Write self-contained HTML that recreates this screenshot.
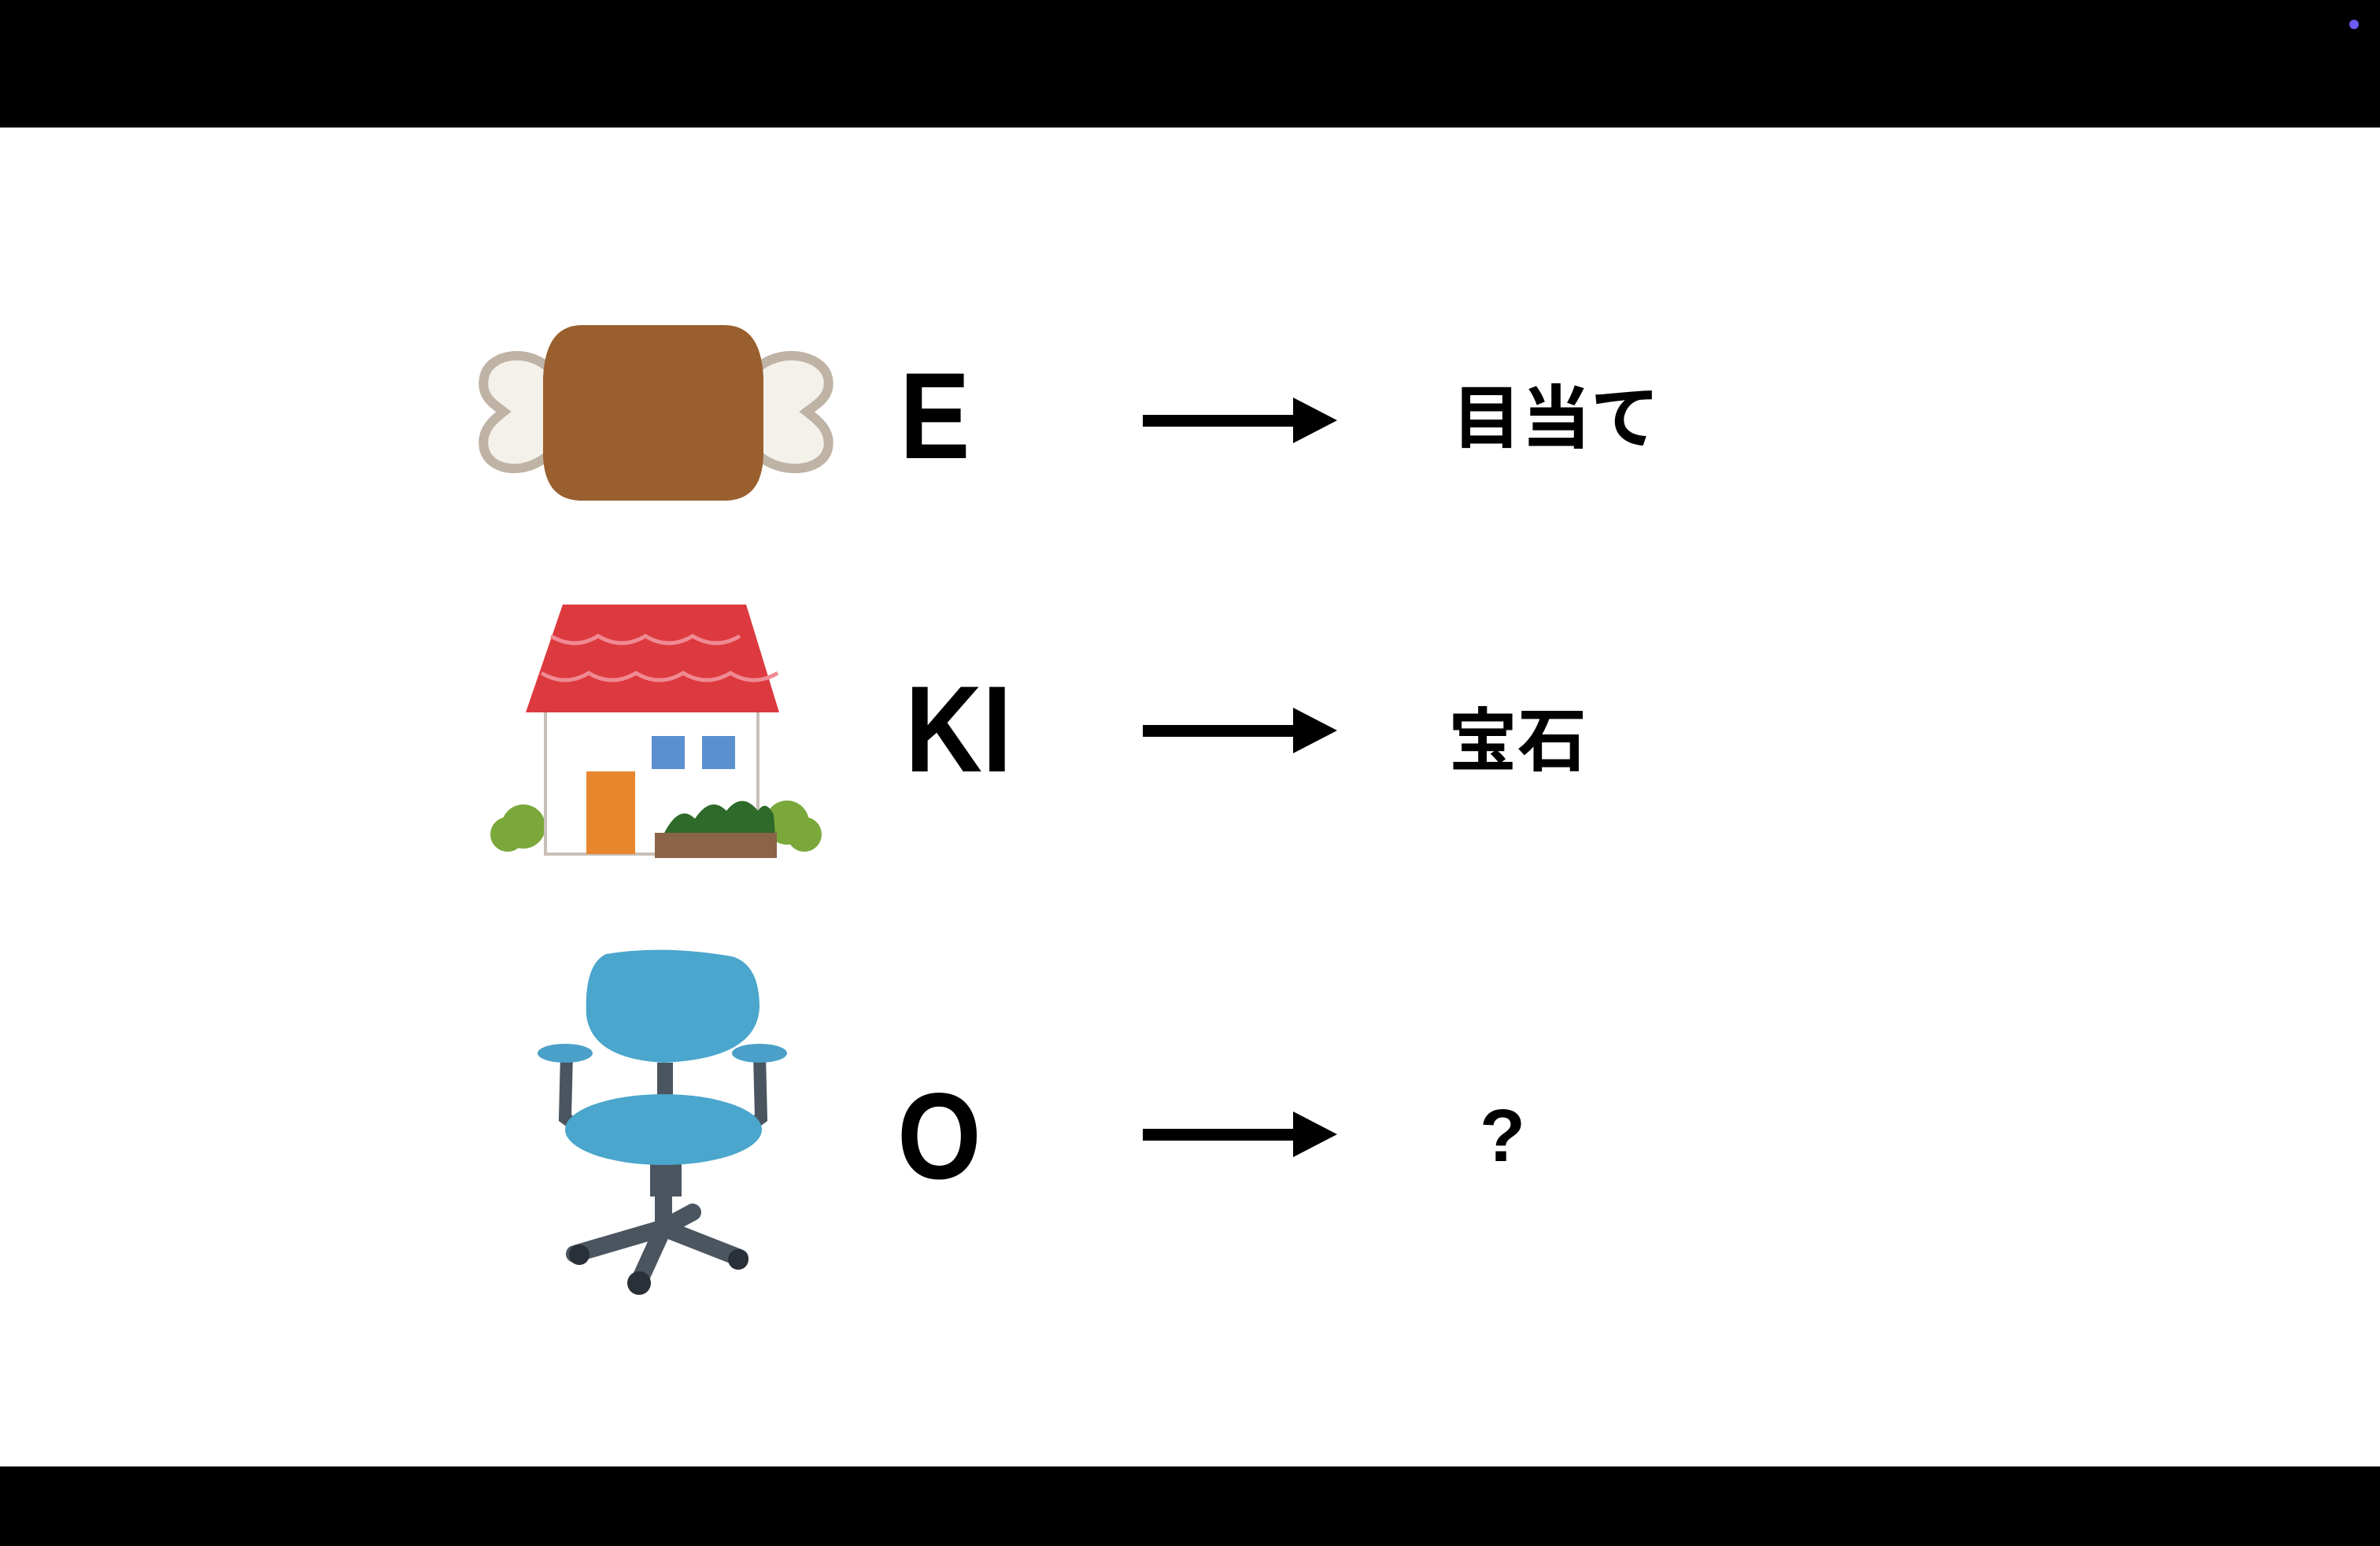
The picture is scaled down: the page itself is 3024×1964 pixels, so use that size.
<!DOCTYPE html>
<html><head><meta charset="utf-8"><style>
html,body{margin:0;padding:0}
body{width:3024px;height:1964px;background:#fff;position:relative;overflow:hidden}
.bar{position:absolute;left:0;width:3024px;background:#000}
svg{position:absolute;left:0;top:0}
</style></head><body>
<div class="bar" style="top:0;height:162px"></div>
<div class="bar" style="top:1863px;height:101px"></div>
<svg width="3024" height="1964" viewBox="0 0 3024 1964">
<circle cx="2991" cy="31" r="6" fill="#6a5cf0"/>
<!-- meat -->
<g>
<path d="M700 470 C670 440,620 450,615 480 C610 505,630 515,640 523 C630 531,610 545,615 570 C622 600,670 605,700 575 Z" fill="#f4f1ea" stroke="#bfb3a6" stroke-width="12"/>
<path d="M960 470 C990 440,1045 450,1052 480 C1057 505,1035 515,1025 523 C1035 531,1057 545,1052 570 C1045 600,990 605,960 575 Z" fill="#f4f1ea" stroke="#bfb3a6" stroke-width="12"/>
<path d="M740 413 L920 413 C955 413,968 440,970 480 L970 580 C968 620,950 636,920 636 L740 636 C710 636,692 620,690 580 L690 480 C692 440,705 413,740 413 Z" fill="#9a5f2e"/>
</g>
<!-- house -->
<g>
<circle cx="665" cy="1050" r="28" fill="#7aa83a"/><circle cx="645" cy="1060" r="22" fill="#7aa83a"/>
<circle cx="1000" cy="1045" r="28" fill="#7aa83a"/><circle cx="1022" cy="1060" r="22" fill="#7aa83a"/>
<rect x="693" y="900" width="270" height="185" fill="#fff" stroke="#c8c0b6" stroke-width="4"/>
<path d="M715 768 L948 768 L990 905 L668 905 Z" fill="#dc3a3e"/>
<path d="M700 808 q30 18 60 0 q30 18 60 0 q30 18 60 0 q30 18 60 0 M688 855 q30 18 60 0 q30 18 60 0 q30 18 60 0 q30 18 60 0 q30 18 60 0" fill="none" stroke="#f08a94" stroke-width="5"/>
<rect x="745" y="980" width="62" height="105" fill="#e8862e"/>
<rect x="828" y="935" width="42" height="42" fill="#5b8fd0"/><rect x="892" y="935" width="42" height="42" fill="#5b8fd0"/>
<path d="M843 1060 q20 -40 40 -20 q20 -30 40 -10 q20 -25 40 0 q10 -15 20 5 L985 1060Z" fill="#2e6a2a"/>
<rect x="832" y="1058" width="155" height="32" fill="#8b6347"/>
</g>
<!-- chair -->
<g>
<path d="M843 1475 L843 1560 M843 1560 L730 1593 M843 1560 L812 1628 M843 1560 L940 1598 M843 1560 L880 1540" stroke="#4a5560" stroke-width="22" stroke-linecap="round"/>
<circle cx="736" cy="1594" r="13" fill="#2a3038"/><circle cx="812" cy="1630" r="15" fill="#2a3038"/><circle cx="938" cy="1600" r="13" fill="#2a3038"/>
<rect x="826" y="1470" width="40" height="50" fill="#4a5560"/>
<rect x="835" y="1350" width="20" height="70" fill="#4a5560"/>
<path d="M720 1340 L718 1420 L745 1440 M965 1340 L967 1420 L940 1440" stroke="#4a5560" stroke-width="16" fill="none"/>
<ellipse cx="718" cy="1338" rx="35" ry="12" fill="#4aa0c8"/><ellipse cx="965" cy="1338" rx="35" ry="12" fill="#4aa0c8"/>
<path d="M770 1212 Q843 1200 930 1215 Q965 1225 965 1280 Q962 1345 843 1350 Q752 1345 745 1290 Q742 1225 770 1212Z" fill="#4aa6cc"/>
<ellipse cx="843" cy="1435" rx="125" ry="45" fill="#4aa6cc"/>
</g>
<!-- text -->
<g font-family="Liberation Sans, sans-serif" font-weight="bold" fill="#000" font-size="156">
<text transform="translate(1143,582) scale(0.86,1)">E</text>
<text transform="translate(1150,980) scale(0.87,1)">KI</text>
<text transform="translate(1140,1497) scale(0.88,1)">O</text>
</g>
<g font-family="Liberation Sans, 'Noto Sans CJK JP', sans-serif" font-weight="bold" fill="#000">
<text x="1845" y="562" font-size="88">目当て</text>
<text x="1840" y="972" font-size="88">宝石</text>
<text x="1880" y="1475" font-size="95">?</text>
</g>
<!-- arrows -->
<g fill="#000">
<rect x="1452" y="527" width="200" height="15"/><path d="M1643 505 L1699 534 L1643 563Z"/>
<rect x="1452" y="921" width="200" height="15"/><path d="M1643 899 L1699 928 L1643 957Z"/>
<rect x="1452" y="1434" width="200" height="15"/><path d="M1643 1412 L1699 1441 L1643 1470Z"/>
</g>
</svg>
</body></html>
